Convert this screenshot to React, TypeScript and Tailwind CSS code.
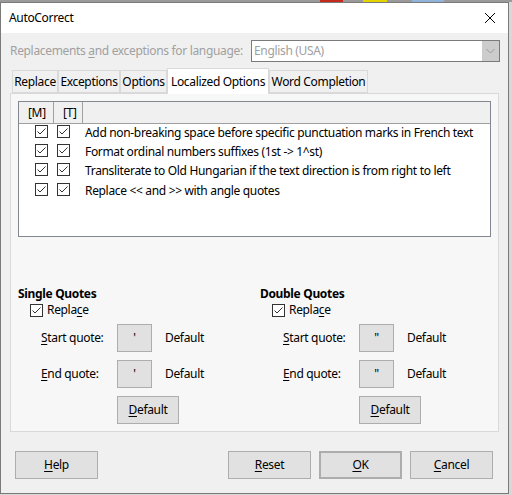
import type { ReactNode } from "react";

function Check() {
  return (
    <span className="inline-flex h-[13px] w-[13px] shrink-0 items-center justify-center border border-[#333] bg-white">
      <svg width="11" height="11" viewBox="0 0 11 11">
        <path d="M1.5 5.5l2.5 2.5L9.5 2.5" fill="none" stroke="#333" strokeWidth="1" />
      </svg>
    </span>
  );
}

function U({ children }: { children: ReactNode }) {
  return <span className="underline underline-offset-2">{children}</span>;
}

function Btn({ children, className = "" }: { children: ReactNode; className?: string }) {
  return (
    <button
      type="button"
      className={`flex h-[28px] shrink-0 items-center justify-center border border-[#adadad] bg-[#e1e1e1] text-[12px] text-black ${className}`}
    >
      {children}
    </button>
  );
}

const rows = [
  "Add non-breaking space before specific punctuation marks in French text",
  "Format ordinal numbers suffixes (1st -> 1^st)",
  "Transliterate to Old Hungarian if the text direction is from right to left",
  "Replace << and >> with angle quotes",
];

const tabs = [
  { label: "Replace", w: "w-[46px]" },
  { label: "Exceptions", w: "w-[62px]" },
  { label: "Options", w: "w-[47px]" },
  { label: "Localized Options", w: "w-[102px]" },
  { label: "Word Completion", w: "w-[99px]" },
];

function QuoteGroup({ title, glyph }: { title: string; glyph: string }) {
  return (
    <div className="flex w-[242px] shrink-0 flex-col">
      <div className="font-bold">{title}</div>
      <div className="ml-[12px] flex items-center gap-[4px]">
        <Check />
        <span>
          Repla<U>c</U>e
        </span>
      </div>
      <div className="ml-[23px] mt-[6px] flex items-center">
        <span className="w-[76px]">
          <U>S</U>tart quote:
        </span>
        <Btn className="w-[35px]">{glyph}</Btn>
        <span className="ml-[13px]">Default</span>
      </div>
      <div className="ml-[23px] mt-[8px] flex items-center">
        <span className="w-[76px]">
          <U>E</U>nd quote:
        </span>
        <Btn className="w-[35px]">{glyph}</Btn>
        <span className="ml-[13px]">Default</span>
      </div>
      <div className="ml-[99px] mt-[8px]">
        <Btn className="w-[62px]">
          <span>
            <U>D</U>efault
          </span>
        </Btn>
      </div>
    </div>
  );
}

export default function App() {
  return (
    <div className="h-[495px] w-[512px] overflow-hidden bg-[#d8d8d8] font-['Noto_Sans',sans-serif] text-[12px] leading-[16px] tracking-[-0.33px] text-black">
      <div className="flex h-[2px] bg-[#9a9a9a]">
        <div className="ml-[320px] w-[23px] bg-[#c42b1c]" />
        <div className="ml-[20px] w-[24px] bg-[#e3d400]" />
        <div className="ml-[25px] w-[32px] bg-[#8fb3d9]" />
      </div>
      <div className="flex h-[492px] w-[509px] flex-col border border-[#7a7a7a] bg-[#f0f0f0]">
        <div className="flex h-[30px] shrink-0 items-center justify-between bg-white pl-[8px] pr-[12px]">
          <span>AutoCorrect</span>
          <svg width="12" height="12" viewBox="0 0 12 12">
            <path d="M1 1l10 10M11 1L1 11" stroke="#000" strokeWidth="1" />
          </svg>
        </div>

        <div className="mt-[7px] flex h-[22px] items-center pl-[9px]">
          <span className="w-[241px] whitespace-nowrap text-[#a0a0a0]">
            Replacements <U>a</U>nd exceptions for language:
          </span>
          <div className="flex h-[22px] w-[249px] items-center border border-[#7a7a7a] bg-white">
            <span className="flex-1 pl-[2px] text-[#a0a0a0]">English (USA)</span>
            <span className="flex h-full w-[17px] items-center justify-center bg-[#cccccc]">
              <svg width="9" height="6" viewBox="0 0 9 6">
                <path d="M0.5 1l4 4 4-4" fill="none" stroke="#999" strokeWidth="1" />
              </svg>
            </span>
          </div>
        </div>

        <div className="ml-[11px] mt-[7px] flex h-[24px] items-end">
          {tabs.map((t, i) =>
            i === 3 ? (
              <div
                key={t.label}
                className={`relative z-10 -mb-[1px] flex h-[26px] items-center justify-center border border-b-0 border-[#d9d9d9] bg-white whitespace-nowrap ${t.w}`}
              >
                {t.label}
              </div>
            ) : (
              <div
                key={t.label}
                className={`flex h-[23px] items-center justify-center border border-[#d9d9d9] bg-[#f0f0f0] whitespace-nowrap ${t.w}`}
              >
                {t.label}
              </div>
            )
          )}
        </div>

        <div className="mx-[9px] flex h-[339px] shrink-0 flex-col overflow-hidden border border-[#d9d9d9] bg-[#f7f7f7] px-[7px] pt-[7px]">
          <div className="flex h-[136px] shrink-0 flex-col border border-[#828790] bg-white">
            <div className="flex h-[22px] shrink-0 border-b border-[#a0a0a0] bg-[#f0f0f0] leading-[21px]">
              <span className="w-[35px] border-r border-[#a0a0a0] pl-[9px]">[M]</span>
              <span className="w-[29px] border-r border-[#a0a0a0] pl-[9px]">[T]</span>
            </div>
            <div className="-mt-[1px]">
              {rows.map((r) => (
                <div key={r} className="flex h-[19.4px] items-center">
                  <span className="ml-[16px]">
                    <Check />
                  </span>
                  <span className="ml-[9px]">
                    <Check />
                  </span>
                  <span className="ml-[15px] whitespace-nowrap">{r}</span>
                </div>
              ))}
            </div>
          </div>

          <div className="mt-[49px] flex">
            <QuoteGroup title="Single Quotes" glyph="'" />
            <QuoteGroup title="Double Quotes" glyph={'"'} />
          </div>
        </div>

        <div className="mt-[19px] flex items-center pl-[14px] pr-[15px]">
          <Btn className="w-[83px]">
            <span>
              <U>H</U>elp
            </span>
          </Btn>
          <div className="flex-1" />
          <Btn className="w-[83px]">
            <span>
              <U>R</U>eset
            </span>
          </Btn>
          <Btn className="ml-[8px] w-[83px] border-2 border-[#0078d7]">
            <span>
              <U>O</U>K
            </span>
          </Btn>
          <Btn className="ml-[8px] w-[83px]">
            <span>
              <U>C</U>ancel
            </span>
          </Btn>
        </div>
      </div>
    </div>
  );
}
